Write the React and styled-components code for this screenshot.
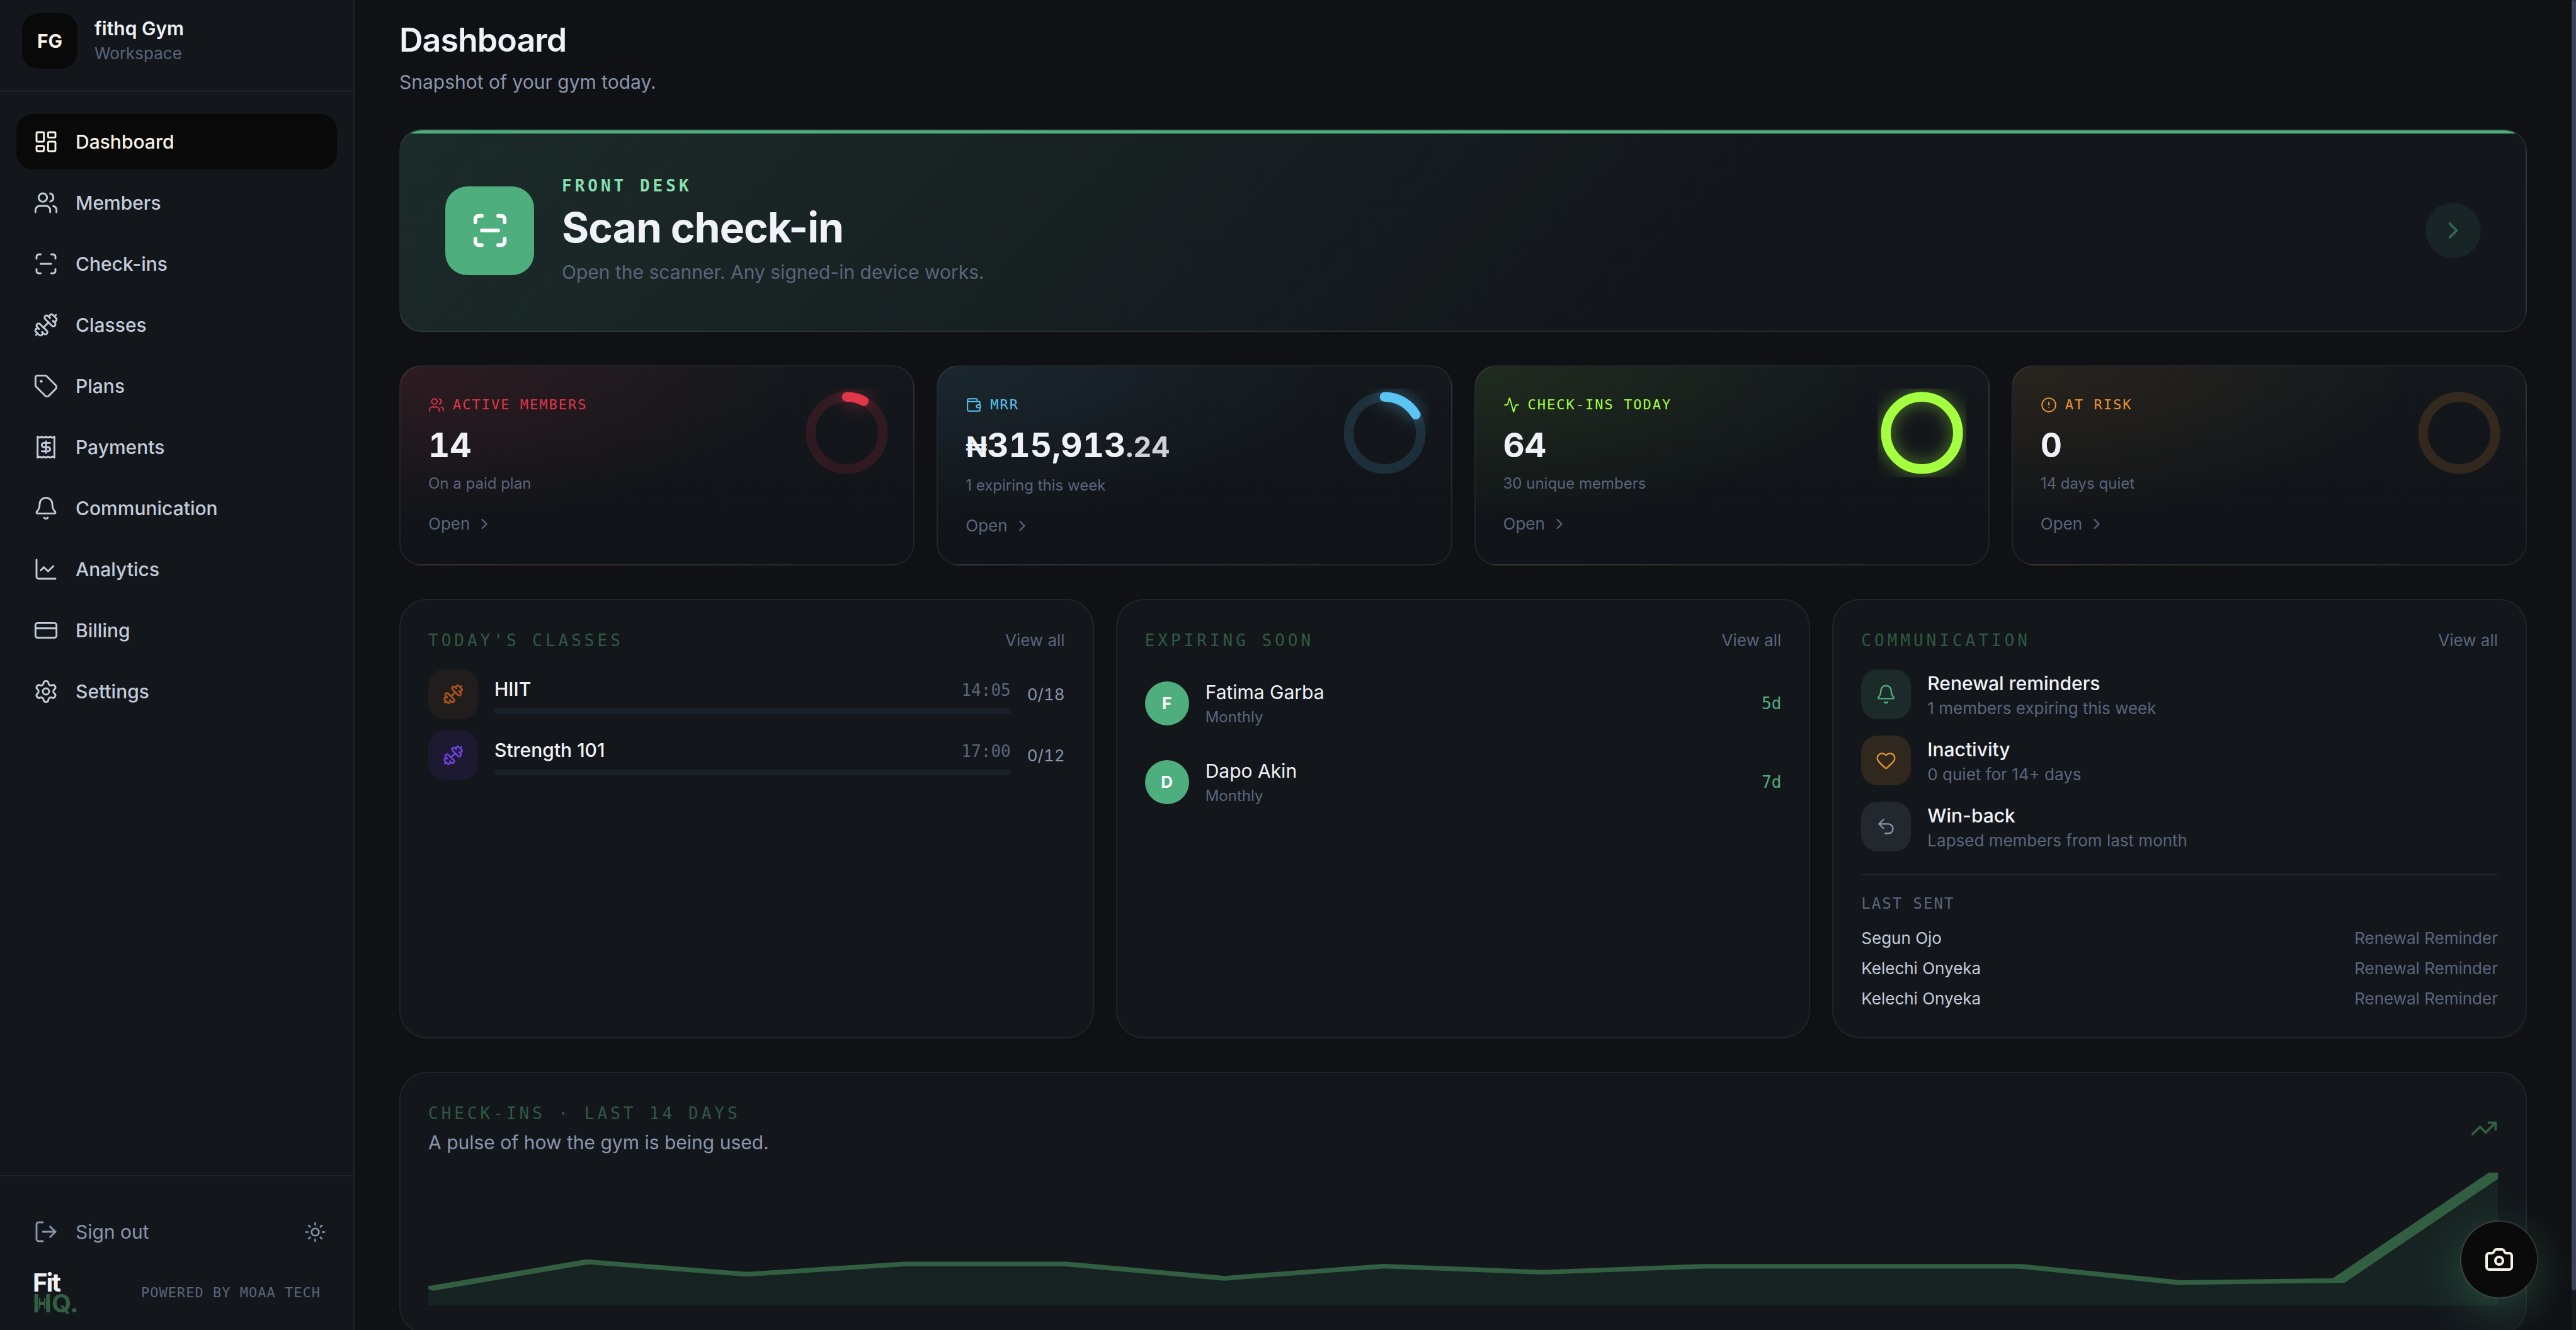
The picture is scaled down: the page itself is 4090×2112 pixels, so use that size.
import { useState } from 'react';
import styled, { createGlobalStyle } from 'styled-components';
import {
    Activity,
    Bell,
    Camera,
    ChartLine,
    ChevronRight,
    CircleAlert,
    CreditCard,
    Dumbbell,
    Heart,
    LayoutDashboard,
    LogOut,
    ScanLine,
    Settings,
    Sun,
    Tag,
    TrendingUp,
    Undo2,
    Users,
} from 'lucide-react';

const mono = `'DejaVu Sans Mono', 'Liberation Mono', monospace`;

const GlobalStyle = createGlobalStyle`
    * {
        box-sizing: border-box;
        margin: 0;
        padding: 0;
    }
    body {
        background: #101114;
        color: #f0f2f8;
        font-family: Inter, 'Liberation Sans', sans-serif;
        font-size: 30px;
        line-height: 44px;
    }
    a {
        color: inherit;
        text-decoration: none;
    }
    button {
        background: none;
        border: none;
        color: inherit;
        font: inherit;
        cursor: pointer;
    }
    ul {
        list-style: none;
    }
    svg {
        display: block;
        flex-shrink: 0;
    }
`;

const Shell = styled.div`
    display: flex;
    height: 100vh;
    overflow: hidden;
`;

/* sidebar */

const Sidebar = styled.aside`
    width: 563px;
    flex-shrink: 0;
    display: flex;
    flex-direction: column;
    background: #13171b;
    border-right: 2px solid #1f242c;
`;

const Workspace = styled.div`
    display: flex;
    align-items: center;
    gap: 27px;
    padding: 21px 35px 35px;
    border-bottom: 2px solid #1f242c;
`;

const WorkspaceBadge = styled.div`
    width: 88px;
    height: 88px;
    display: flex;
    align-items: center;
    justify-content: center;
    border-radius: 26px;
    background: #090909;
    color: #f7f3e6;
    font-weight: 700;
`;

const WorkspaceText = styled.div`
    display: flex;
    flex-direction: column;
    padding-bottom: 6px;
`;

const WorkspaceName = styled.span`
    font-weight: 600;
`;

const Small = styled.span`
    color: #5a657d;
    font-size: ${(props) => (props.$tiny ? '24px' : '26px')};
    line-height: 35px;
`;

const Nav = styled.nav`
    flex: 1;
    padding: 35px 26px;
`;

const NavList = styled.ul`
    display: flex;
    flex-direction: column;
    gap: 9px;
`;

const NavLink = styled.a`
    display: flex;
    align-items: center;
    gap: 27px;
    height: 88px;
    padding: 0 27px;
    border-radius: 26px;
    font-weight: 500;
    color: ${(props) => (props.$active ? '#f7f3e6' : '#c3cbdb')};
    background: ${(props) => (props.$active ? '#090909' : 'transparent')};
`;

const SidebarFooter = styled.div`
    display: flex;
    flex-direction: column;
    gap: 20px;
    padding: 44px 26px 26px;
    border-top: 2px solid #1f242c;
`;

const FooterRow = styled.div`
    display: flex;
    align-items: center;
    justify-content: space-between;
    color: #8a95ae;
`;

const SignOut = styled.button`
    display: flex;
    align-items: center;
    gap: 27px;
    height: 88px;
    padding: 0 27px;
`;

const ThemeToggle = styled.button`
    width: 70px;
    height: 70px;
    display: flex;
    align-items: center;
    justify-content: center;
`;

const Brand = styled.div`
    display: flex;
    align-items: center;
    justify-content: space-between;
    padding: 0 26px;
`;

const BrandMark = styled.div`
    display: flex;
    flex-direction: column;
    font-size: 40px;
    font-weight: 700;
    line-height: 33px;
`;

const BrandFit = styled.span`
    letter-spacing: -2px;
`;

const BrandGreen = styled.span`
    position: relative;
    color: #325f42;
`;

const Plates = styled.svg`
    position: absolute;
    left: 0;
    top: 0;
`;

const PoweredBy = styled.span`
    color: #5a657d;
    font-family: ${mono};
    font-size: 22px;
    letter-spacing: 1px;
`;

/* main column */

const Main = styled.main`
    flex: 1;
    min-width: 0;
    display: flex;
    flex-direction: column;
    gap: 53px;
    padding: 31px 71px 71px;
    overflow: hidden;
`;

const PageHeader = styled.header`
    display: flex;
    flex-direction: column;
    gap: 11px;
    color: #8a95ae;
`;

const PageTitle = styled.h1`
    color: #f0f2f8;
    font-size: 52px;
    font-weight: 600;
    line-height: 66px;
    letter-spacing: -1px;
`;

const Hero = styled.a`
    position: relative;
    flex-shrink: 0;
    display: flex;
    align-items: center;
    gap: 44px;
    padding: 71px;
    overflow: hidden;
    border: 2px solid rgba(255, 255, 255, 0.07);
    border-radius: 35px;
    background: linear-gradient(135deg, rgba(79, 174, 125, 0.14), rgba(79, 174, 125, 0) 60%), #13161b;
    &::before {
        content: '';
        position: absolute;
        inset: 0 0 auto;
        height: 5px;
        background: #4fae7d;
    }
`;

const HeroIcon = styled.div`
    width: 141px;
    height: 141px;
    display: flex;
    align-items: center;
    justify-content: center;
    border-radius: 35px;
    background: #4fae7d;
    color: #fff;
`;

const HeroText = styled.div`
    flex: 1;
    display: flex;
    flex-direction: column;
    gap: 9px;
    color: #5a657d;
`;

const Eyebrow = styled.span`
    color: ${(props) => props.$color || '#2f5a40'};
    font-family: ${mono};
    font-size: 26px;
    font-weight: ${(props) => (props.$bold ? 700 : 400)};
    line-height: ${(props) => (props.$bold ? '35px' : '40px')};
    letter-spacing: 5px;
    text-transform: uppercase;
`;

const HeroTitle = styled.h2`
    color: #f0f2f8;
    font-size: 66px;
    font-weight: 700;
    line-height: 79px;
    letter-spacing: -1px;
`;

const HeroArrow = styled.div`
    width: 88px;
    height: 88px;
    display: flex;
    align-items: center;
    justify-content: center;
    border-radius: 50%;
    background: #182425;
    color: #33684e;
`;

const Stats = styled.section`
    display: grid;
    grid-template-columns: repeat(4, 1fr);
    gap: 35px;
`;

const StatCard = styled.article`
    display: flex;
    align-items: flex-start;
    justify-content: space-between;
    padding: 35px;
    border: 2px solid rgba(255, 255, 255, 0.07);
    border-radius: 35px;
    background: radial-gradient(ellipse at 0 0, ${(props) => props.$tint}, transparent 55%),
        linear-gradient(#14181c, #101317);
`;

const StatBody = styled.div`
    display: flex;
    flex-direction: column;
    padding: 9px;
`;

const StatLabel = styled.h3`
    display: flex;
    align-items: center;
    gap: 13px;
    margin-bottom: 18px;
    color: ${(props) => props.$color};
    font-family: ${mono};
    font-size: 22px;
    font-weight: 400;
    line-height: 33px;
    letter-spacing: 2px;
    text-transform: uppercase;
`;

const StatValue = styled.div`
    margin-bottom: 13px;
    font-size: 53px;
    font-weight: 700;
    line-height: 60px;
    font-variant-numeric: tabular-nums;
`;

const MoneySmall = styled.span`
    font-size: 45px;
    opacity: ${(props) => (props.$dim ? 0.85 : 1)};
`;

const StatNote = styled.p`
    margin-bottom: 28px;
    color: #5a657d;
    font-size: 24px;
    line-height: 36px;
`;

const OpenLink = styled.a`
    display: flex;
    align-items: center;
    gap: 9px;
    color: #5a657d;
    font-size: 26px;
    line-height: 35px;
`;

const Arc = styled.circle`
    filter: drop-shadow(0 0 6px ${(props) => props.stroke}80);
`;

const Panels = styled.section`
    display: grid;
    grid-template-columns: repeat(3, 1fr);
    gap: 35px;
`;

const Panel = styled.article`
    flex-shrink: 0;
    padding: 44px;
    border: 2px solid rgba(255, 255, 255, 0.06);
    border-radius: 44px;
    background: #13171b;
`;

const PanelHead = styled.div`
    display: flex;
    align-items: center;
    justify-content: space-between;
    margin-bottom: 26px;
    color: #5a657d;
    font-size: 26px;
    line-height: 40px;
`;

const Rows = styled.ul`
    display: flex;
    flex-direction: column;
    gap: ${(props) => props.$gap};
`;

const Row = styled.li`
    display: flex;
    align-items: center;
    gap: 26px;
    padding: ${(props) => (props.$padded ? '14px 0' : '0')};
`;

const Tile = styled.div`
    width: 79px;
    height: 79px;
    flex-shrink: 0;
    display: flex;
    align-items: center;
    justify-content: center;
    border-radius: 26px;
    background: ${(props) => props.$bg};
    color: ${(props) => props.$color};
`;

const ClassInfo = styled.div`
    flex: 1;
    display: flex;
    flex-direction: column;
    gap: 9px;
`;

const ClassTop = styled.div`
    display: flex;
    align-items: baseline;
    justify-content: space-between;
`;

const ItemTitle = styled.span`
    font-weight: ${(props) => (props.$regular ? 400 : 500)};
`;

const ClassTime = styled.time`
    color: #5a657d;
    font-family: ${mono};
    font-size: 26px;
    line-height: 35px;
`;

const Track = styled.div`
    height: 9px;
    border-radius: 4px;
    background: #1a2028;
`;

const Count = styled.span`
    color: #8a95ae;
    font-size: 26px;
    line-height: 35px;
    font-variant-numeric: tabular-nums;
`;

const Avatar = styled.div`
    width: 70px;
    height: 70px;
    display: flex;
    align-items: center;
    justify-content: center;
    border-radius: 50%;
    background: #4fae7d;
    color: #fff;
    font-size: 26px;
    font-weight: 700;
`;

const ItemText = styled.div`
    flex: 1;
    display: flex;
    flex-direction: column;
`;

const DaysLeft = styled.span`
    color: #4fae7d;
    font-family: ${mono};
    font-size: 26px;
`;

const LastSent = styled.div`
    margin-top: 36px;
    padding-top: 26px;
    border-top: 2px solid #202428;
`;

const LastSentTitle = styled.h4`
    margin-bottom: 18px;
    color: #5a657d;
    font-family: ${mono};
    font-size: 24px;
    font-weight: 400;
    line-height: 38px;
    letter-spacing: 2px;
    text-transform: uppercase;
`;

const SentRow = styled.li`
    display: flex;
    justify-content: space-between;
    color: #c3cbdb;
    font-size: 26px;
    line-height: 35px;
`;

const ChartHead = styled.div`
    display: flex;
    align-items: center;
    justify-content: space-between;
    margin-bottom: 26px;
    color: #325f42;
`;

const ChartTitles = styled.div`
    display: flex;
    flex-direction: column;
    gap: 4px;
`;

const ChartNote = styled.p`
    color: #8a95ae;
`;

const Chart = styled.svg`
    width: 100%;
    height: 211px;
`;

const ScrollRail = styled.div`
    width: 7px;
    flex-shrink: 0;
    background: #161b20;
`;

const ScrollThumb = styled.div`
    height: 97%;
    border-radius: 4px;
    background: #3b4358;
`;

const ScanButton = styled.button`
    position: fixed;
    right: 60px;
    bottom: 50px;
    width: 124px;
    height: 124px;
    display: flex;
    align-items: center;
    justify-content: center;
    border: 2px solid rgba(255, 255, 255, 0.12);
    border-radius: 50%;
    background: #0a0a0a;
    background-clip: padding-box;
    color: #f7f3e6;
    box-shadow: 0 18px 70px rgba(79, 174, 125, 0.3);
`;

const navItems = [
    { label: 'Dashboard', icon: LayoutDashboard },
    { label: 'Members', icon: Users },
    { label: 'Check-ins', icon: ScanLine },
    { label: 'Classes', icon: Dumbbell },
    { label: 'Plans', icon: Tag },
    { label: 'Payments', icon: ReceiptIcon },
    { label: 'Communication', icon: Bell },
    { label: 'Analytics', icon: ChartLine },
    { label: 'Billing', icon: CreditCard },
    { label: 'Settings', icon: Settings },
];

const stats = [
    {
        label: 'Active members',
        icon: Users,
        value: '14',
        note: 'On a paid plan',
        color: '#e0364a',
        tint: 'rgba(224, 54, 74, 0.13)',
        ratio: 0.078,
    },
    {
        label: 'MRR',
        icon: WalletIcon,
        value: (
            <>
                <MoneySmall>₦</MoneySmall>315,913<MoneySmall $dim>.24</MoneySmall>
            </>
        ),
        note: '1 expiring this week',
        color: '#5ac4f2',
        tint: 'rgba(90, 196, 242, 0.09)',
        ratio: 0.165,
    },
    {
        label: 'Check-ins today',
        icon: Activity,
        value: '64',
        note: '30 unique members',
        color: '#a3ff3f',
        tint: 'rgba(163, 255, 63, 0.09)',
        ratio: 1,
    },
    {
        label: 'At risk',
        icon: CircleAlert,
        value: '0',
        note: '14 days quiet',
        color: '#e8952f',
        tint: 'rgba(232, 149, 47, 0.1)',
        ratio: 0,
    },
];

const classes = [
    { name: 'HIIT', time: '14:05', count: '0/18', color: '#a9541f', bg: '#211d1c' },
    { name: 'Strength 101', time: '17:00', count: '0/12', color: '#6d3fe0', bg: '#1c1930' },
];

const expiring = [
    { name: 'Fatima Garba', plan: 'Monthly', left: '5d' },
    { name: 'Dapo Akin', plan: 'Monthly', left: '7d' },
];

const automations = [
    {
        name: 'Renewal reminders',
        note: '1 members expiring this week',
        icon: Bell,
        color: '#4fae7d',
        bg: '#1c2a29',
    },
    { name: 'Inactivity', note: '0 quiet for 14+ days', icon: Heart, color: '#e8952f', bg: '#30281f' },
    {
        name: 'Win-back',
        note: 'Lapsed members from last month',
        icon: Undo2,
        color: '#8a95ae',
        bg: '#23272e',
    },
];

const sent = ['Segun Ojo', 'Kelechi Onyeka', 'Kelechi Onyeka'];

// y values in the 96-unit tall chart, one per day
const series = [84, 64.5, 73.5, 66, 66, 76.4, 67.6, 72, 67.7, 67.7, 67.7, 79.5, 78, 0];
const points = series.map((y, i) => `${(i * 400) / 13},${y}`).join(' ');

function Glyph({ size, strokeWidth, children }) {
    return (
        <svg
            width={size}
            height={size}
            viewBox="0 0 24 24"
            fill="none"
            stroke="currentColor"
            strokeWidth={strokeWidth}
            strokeLinecap="round"
            strokeLinejoin="round"
        >
            {children}
        </svg>
    );
}

function ReceiptIcon(props) {
    return (
        <Glyph {...props}>
            <path d="M4 2v20l2-1 2 1 2-1 2 1 2-1 2 1 2-1 2 1V2l-2 1-2-1-2 1-2-1-2 1-2-1-2 1Z" />
            <path d="M16 8h-6a2 2 0 1 0 0 4h4a2 2 0 1 1 0 4H8" />
            <path d="M12 17.5v-11" />
        </Glyph>
    );
}

function WalletIcon(props) {
    return (
        <Glyph {...props}>
            <path d="M17 7V4a1 1 0 0 0-1-1H5a2 2 0 0 0 0 4h15a1 1 0 0 1 1 1v4h-3a2 2 0 0 0 0 4h3a1 1 0 0 0 1-1v-2a1 1 0 0 0-1-1" />
            <path d="M3 5v14a2 2 0 0 0 2 2h15a1 1 0 0 0 1-1v-4" />
        </Glyph>
    );
}

const Ring = ({ color, ratio }) => {
    const length = 2 * Math.PI * 26;
    return (
        <svg width="141" height="141" viewBox="0 0 64 64" fill="none" aria-hidden="true">
            <circle cx="32" cy="32" r="26" stroke={color} strokeOpacity="0.15" strokeWidth="7" />
            {ratio > 0 && (
                <Arc
                    cx="32"
                    cy="32"
                    r="26"
                    stroke={color}
                    strokeWidth="7"
                    strokeLinecap="round"
                    strokeDasharray={`${length * ratio} ${length}`}
                    transform="rotate(-90 32 32)"
                />
            )}
        </svg>
    );
};

const PanelHeader = ({ title }) => (
    <PanelHead>
        <Eyebrow as="h3">{title}</Eyebrow>
        <a href="#all">View all</a>
    </PanelHead>
);

export default function App() {
    const [active, setActive] = useState('Dashboard');
    return (
        <Shell>
            <GlobalStyle />
            <Sidebar>
                <Workspace>
                    <WorkspaceBadge>FG</WorkspaceBadge>
                    <WorkspaceText>
                        <WorkspaceName>fithq Gym</WorkspaceName>
                        <Small>Workspace</Small>
                    </WorkspaceText>
                </Workspace>
                <Nav>
                    <NavList>
                        {navItems.map(({ label, icon: Icon }) => (
                            <li key={label}>
                                <NavLink
                                    href={`#${label.toLowerCase()}`}
                                    $active={label === active}
                                    onClick={() => setActive(label)}
                                >
                                    <Icon size={40} strokeWidth={1.75} />
                                    {label}
                                </NavLink>
                            </li>
                        ))}
                    </NavList>
                </Nav>
                <SidebarFooter>
                    <FooterRow>
                        <SignOut>
                            <LogOut size={40} strokeWidth={1.75} />
                            Sign out
                        </SignOut>
                        <ThemeToggle aria-label="Toggle theme">
                            <Sun size={35} strokeWidth={1.75} />
                        </ThemeToggle>
                    </FooterRow>
                    <Brand>
                        <BrandMark>
                            <BrandFit>Fit</BrandFit>
                            <BrandGreen>
                                HQ.
                                <Plates width="30" height="33" viewBox="0 0 30 33" aria-hidden="true">
                                    <rect x="9" y="12" width="12" height="9" fill="#13171b" />
                                    <g fill="#325f42">
                                        <rect x="10" y="8" width="2" height="17" />
                                        <rect x="12" y="14" width="6" height="5" />
                                        <rect x="18" y="8" width="2" height="17" />
                                    </g>
                                </Plates>
                            </BrandGreen>
                        </BrandMark>
                        <PoweredBy>POWERED BY MOAA TECH</PoweredBy>
                    </Brand>
                </SidebarFooter>
            </Sidebar>

            <Main>
                <PageHeader>
                    <PageTitle>Dashboard</PageTitle>
                    <p>Snapshot of your gym today.</p>
                </PageHeader>

                <Hero href="#scan">
                    <HeroIcon>
                        <ScanLine size={62} strokeWidth={2.25} />
                    </HeroIcon>
                    <HeroText>
                        <Eyebrow $bold $color="#86e0b0">
                            Front desk
                        </Eyebrow>
                        <HeroTitle>Scan check-in</HeroTitle>
                        <p>Open the scanner. Any signed-in device works.</p>
                    </HeroText>
                    <HeroArrow>
                        <ChevronRight size={44} strokeWidth={2} />
                    </HeroArrow>
                </Hero>

                <Stats>
                    {stats.map(({ label, icon: Icon, value, note, color, tint, ratio }) => (
                        <StatCard key={label} $tint={tint}>
                            <StatBody>
                                <StatLabel $color={color}>
                                    <Icon size={26} strokeWidth={1.75} />
                                    {label}
                                </StatLabel>
                                <StatValue>{value}</StatValue>
                                <StatNote>{note}</StatNote>
                                <OpenLink href="#open">
                                    Open
                                    <ChevronRight size={28} strokeWidth={2} />
                                </OpenLink>
                            </StatBody>
                            <Ring color={color} ratio={ratio} />
                        </StatCard>
                    ))}
                </Stats>

                <Panels>
                    <Panel>
                        <PanelHeader title="Today's classes" />
                        <Rows $gap="18px">
                            {classes.map((item) => (
                                <Row key={item.name}>
                                    <Tile $bg={item.bg} $color={item.color}>
                                        <Dumbbell size={33} strokeWidth={2} />
                                    </Tile>
                                    <ClassInfo>
                                        <ClassTop>
                                            <ItemTitle>{item.name}</ItemTitle>
                                            <ClassTime>{item.time}</ClassTime>
                                        </ClassTop>
                                        <Track />
                                    </ClassInfo>
                                    <Count>{item.count}</Count>
                                </Row>
                            ))}
                        </Rows>
                    </Panel>

                    <Panel>
                        <PanelHeader title="Expiring soon" />
                        <Rows $gap="18px">
                            {expiring.map((item) => (
                                <Row key={item.name} $padded>
                                    <Avatar>{item.name[0]}</Avatar>
                                    <ItemText>
                                        <ItemTitle $regular>{item.name}</ItemTitle>
                                        <Small $tiny>{item.plan}</Small>
                                    </ItemText>
                                    <DaysLeft>{item.left}</DaysLeft>
                                </Row>
                            ))}
                        </Rows>
                    </Panel>

                    <Panel>
                        <PanelHeader title="Communication" />
                        <Rows $gap="26px">
                            {automations.map(({ name, note, icon: Icon, color, bg }) => (
                                <Row key={name}>
                                    <Tile $bg={bg} $color={color}>
                                        <Icon size={33} strokeWidth={1.75} />
                                    </Tile>
                                    <ItemText>
                                        <ItemTitle>{name}</ItemTitle>
                                        <Small>{note}</Small>
                                    </ItemText>
                                </Row>
                            ))}
                        </Rows>
                        <LastSent>
                            <LastSentTitle>Last sent</LastSentTitle>
                            <Rows $gap="13px">
                                {sent.map((name, i) => (
                                    <SentRow key={i}>
                                        {name}
                                        <Small>Renewal Reminder</Small>
                                    </SentRow>
                                ))}
                            </Rows>
                        </LastSent>
                    </Panel>
                </Panels>

                <Panel>
                    <ChartHead>
                        <ChartTitles>
                            <Eyebrow as="h3">Check-ins · last 14 days</Eyebrow>
                            <ChartNote>A pulse of how the gym is being used.</ChartNote>
                        </ChartTitles>
                        <TrendingUp size={44} strokeWidth={2} />
                    </ChartHead>
                    <Chart viewBox="0 0 400 96" preserveAspectRatio="none" aria-hidden="true">
                        <polygon points={`0,96 ${points} 400,96`} fill="#4fae7d" fillOpacity="0.08" />
                        <polyline points={points} fill="none" stroke="#325f42" strokeWidth="3.3" />
                    </Chart>
                </Panel>
            </Main>

            <ScrollRail>
                <ScrollThumb />
            </ScrollRail>

            <ScanButton aria-label="Scan check-in">
                <Camera size={48} strokeWidth={2} />
            </ScanButton>
        </Shell>
    );
}
